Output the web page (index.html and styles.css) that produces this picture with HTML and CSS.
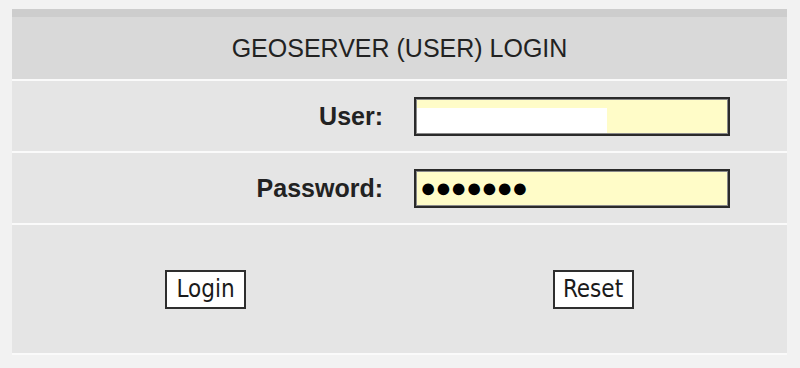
FILE: index.html
```html
<!DOCTYPE html>
<html lang="en">
<head>
    <meta charset="UTF-8">
    <meta name="viewport" content="width=device-width, initial-scale=1.0">
    <title>GeoServer Login</title>
    <link rel="stylesheet" href="styles.css">
</head>
<body>
    <form class="login-box" action="#" method="post">
        <div class="login-title">GEOSERVER (USER) LOGIN</div>

        <div class="login-row">
            <label class="login-label" for="username">User:</label>
            <div class="login-field">
                <input class="field field-user" type="text" id="username" name="username">
            </div>
        </div>

        <div class="login-row">
            <label class="login-label" for="password">Password:</label>
            <div class="login-field">
                <input class="field field-pass" type="text" id="password" name="password" value="●●●●●●●">
            </div>
        </div>

        <div class="login-buttons">
            <div class="button-cell"><button class="btn" type="submit">Login</button></div>
            <div class="button-cell"><button class="btn" type="reset">Reset</button></div>
        </div>
    </form>
</body>
</html>
```

FILE: styles.css
```css
body {
    margin: 0;
    padding: 0;
    background-color: #f2f2f2;
    font-family: "Liberation Sans", Arial, sans-serif;
    color: #222;
}

.login-box {
    width: 775px;
    margin: 9px 0 0 12px;
}

.login-title {
    height: 62px;
    border-top: 8px solid #cdcdcd;
    border-bottom: 2px solid #fafafa;
    background-color: #d9d9d9;
    display: flex;
    align-items: center;
    justify-content: center;
    font-size: 25px;
}

.login-row {
    display: grid;
    grid-template-columns: 387px 1fr;
    height: 70px;
    background-color: #e5e5e5;
    border-bottom: 2px solid #fafafa;
}

.login-label {
    display: flex;
    align-items: center;
    justify-content: flex-end;
    padding-right: 16px;
    font-size: 25px;
    font-weight: bold;
}

.login-field {
    display: flex;
    align-items: center;
    padding-left: 15px;
}

.field {
    box-sizing: border-box;
    width: 316px;
    height: 39px;
    margin: 0;
    padding: 0 5px;
    border: 2px solid #2a2a2a;
    box-shadow: inset 0 0 0 1px #8a8a8a;
    background-color: #fffcc8;
    outline: none;
}

.field-user {
    background-image: linear-gradient(#fff, #fff);
    background-repeat: no-repeat;
    background-size: 190px 26px;
    background-position: 1px 100%;
}

.field-pass {
    padding: 0 4px;
    font-family: "Liberation Sans", Arial, sans-serif;
    font-size: 27px;
    letter-spacing: -1px;
    color: #000;
}

.login-buttons {
    display: grid;
    grid-template-columns: 387px 1fr;
    height: 128px;
    background-color: #e5e5e5;
    border-bottom: 2px solid #fafafa;
}

.button-cell {
    display: flex;
    align-items: center;
    justify-content: center;
}

.btn {
    box-sizing: border-box;
    width: 81px;
    height: 39px;
    margin: 0;
    padding: 0;
    border: 2px solid #2e2e2e;
    background-color: #fff;
    font-family: "DejaVu Sans Condensed", "DejaVu Sans", sans-serif;
    font-size: 24px;
    color: #1a1a1a;
    cursor: pointer;
}
```
